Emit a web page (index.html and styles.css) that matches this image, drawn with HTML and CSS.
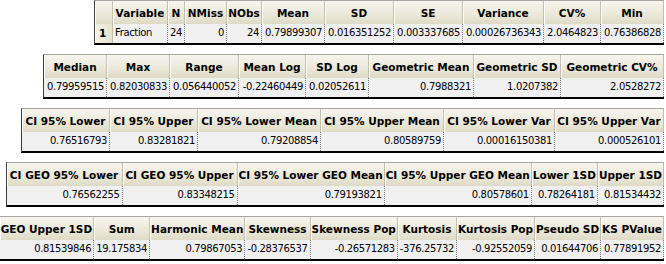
FILE: index.html
```html
<!DOCTYPE html>
<html lang="en">
<head>
<meta charset="utf-8">
<title>Summary statistics</title>
<link rel="stylesheet" href="styles.css">
</head>
<body>
<div class="stats">
  <table class="grid g-desc">
    <thead>
      <tr><th class="corner"></th><th>Variable</th><th>N</th><th>NMiss</th><th>NObs</th><th>Mean</th><th>SD</th><th>SE</th><th>Variance</th><th>CV%</th><th>Min</th></tr>
    </thead>
    <tbody>
      <tr><th class="rownum">1</th><td class="txt">Fraction</td><td class="txt">24</td><td>0</td><td>24</td><td>0.79899307</td><td>0.016351252</td><td>0.003337685</td><td>0.00026736343</td><td>2.0464823</td><td>0.76386828</td></tr>
    </tbody>
  </table>

  <table class="grid g-spread">
    <thead>
      <tr><th>Median</th><th>Max</th><th>Range</th><th>Mean Log</th><th>SD Log</th><th>Geometric Mean</th><th>Geometric SD</th><th>Geometric CV%</th></tr>
    </thead>
    <tbody>
      <tr><td>0.79959515</td><td>0.82030833</td><td>0.056440052</td><td>-0.22460449</td><td>0.02052611</td><td>0.7988321</td><td>1.0207382</td><td>2.0528272</td></tr>
    </tbody>
  </table>

  <table class="grid g-ci">
    <thead>
      <tr><th>CI 95% Lower</th><th>CI 95% Upper</th><th>CI 95% Lower Mean</th><th>CI 95% Upper Mean</th><th>CI 95% Lower Var</th><th>CI 95% Upper Var</th></tr>
    </thead>
    <tbody>
      <tr><td>0.76516793</td><td>0.83281821</td><td>0.79208854</td><td>0.80589759</td><td>0.00016150381</td><td>0.000526101</td></tr>
    </tbody>
  </table>

  <table class="grid g-ci-geo">
    <thead>
      <tr><th>CI GEO 95% Lower</th><th>CI GEO 95% Upper</th><th>CI 95% Lower GEO Mean</th><th>CI 95% Upper GEO Mean</th><th>Lower 1SD</th><th>Upper 1SD</th></tr>
    </thead>
    <tbody>
      <tr><td>0.76562255</td><td>0.83348215</td><td>0.79193821</td><td>0.80578601</td><td>0.78264181</td><td>0.81534432</td></tr>
    </tbody>
  </table>

  <table class="grid g-shape">
    <thead>
      <tr><th>GEO Upper 1SD</th><th>Sum</th><th>Harmonic Mean</th><th>Skewness</th><th>Skewness Pop</th><th>Kurtosis</th><th>Kurtosis Pop</th><th>Pseudo SD</th><th>KS PValue</th></tr>
    </thead>
    <tbody>
      <tr><td>0.81539846</td><td>19.175834</td><td>0.79867053</td><td>-0.28376537</td><td>-0.26571283</td><td>-376.25732</td><td>-0.92552059</td><td>0.01644706</td><td>0.77891952</td></tr>
    </tbody>
  </table>
</div>
</body>
</html>
```

FILE: styles.css
```css
html, body {
  margin: 0;
  background: #ffffff;
}

body {
  font-family: "DejaVu Sans", Verdana, sans-serif;
  font-size: 10px;
  line-height: 12px;
  color: #000000;
}

/* stack of result grids, each pushed to the right edge */
.stats {
  display: flex;
  flex-direction: column;
  align-items: flex-end;
  gap: 9px;
  padding-right: 2px;
}

.grid {
  border-collapse: separate;
  border-spacing: 0;
  border-top: 1px solid #a7a6a0;
  border-left: 1px solid #3c3c3c;
  border-bottom: 2px solid #000000;
}

.grid th,
.grid td {
  box-sizing: border-box;
  white-space: nowrap;
}

/* column headers: beige, raised look */
.grid th {
  height: 23px;
  padding: 0 1px;
  font-size: 10.5px;
  font-weight: bold;
  text-align: center;
  vertical-align: middle;
  background: linear-gradient(#f6f5ee, #ebe8d9 60%, #dedac6);
  border-right: 1px solid #c3bfaa;
  box-shadow: inset 1px 0 #ffffff;
}

.grid th.rownum {
  height: 19px;
  padding: 3px 0 0 4px;
  text-align: left;
  vertical-align: top;
  background: linear-gradient(90deg, #f4f2e8, #e6e2cf);
}

/* value cells */
.grid td {
  height: 19px;
  padding: 3px 2px 0;
  vertical-align: top;
  text-align: right;
  letter-spacing: -0.35px;
  background: #f0f0f0;
  border-right: 1px dotted #7c7c7c;
}

.grid td.txt {
  text-align: left;
}

/* column widths, left to right */
.g-desc th:nth-child(1)  { width: 18px; }
.g-desc th:nth-child(2)  { width: 55px; }
.g-desc th:nth-child(3)  { width: 15px; }
.g-desc th:nth-child(4)  { width: 42px; }
.g-desc th:nth-child(5)  { width: 35px; }
.g-desc th:nth-child(6)  { width: 63px; }
.g-desc th:nth-child(7)  { width: 69px; }
.g-desc th:nth-child(8)  { width: 69px; }
.g-desc th:nth-child(9)  { width: 81px; }
.g-desc th:nth-child(10) { width: 57px; }
.g-desc th:nth-child(11) { width: 63px; }

.g-spread th:nth-child(1) { width: 63px; }
.g-spread th:nth-child(2) { width: 63px; }
.g-spread th:nth-child(3) { width: 69px; }
.g-spread th:nth-child(4) { width: 67px; }
.g-spread th:nth-child(5) { width: 63px; }
.g-spread th:nth-child(6) { width: 105px; }
.g-spread th:nth-child(7) { width: 87px; }
.g-spread th:nth-child(8) { width: 103px; }

.g-ci th:nth-child(1) { width: 88px; }
.g-ci th:nth-child(2) { width: 88px; }
.g-ci th:nth-child(3) { width: 123px; }
.g-ci th:nth-child(4) { width: 123px; }
.g-ci th:nth-child(5) { width: 111px; }
.g-ci th:nth-child(6) { width: 109px; }

.g-ci-geo th:nth-child(1) { width: 116px; }
.g-ci-geo th:nth-child(2) { width: 115px; }
.g-ci-geo th:nth-child(3) { width: 147px; }
.g-ci-geo th:nth-child(4) { width: 145px; }
.g-ci-geo th:nth-child(5) { width: 66px; }
.g-ci-geo th:nth-child(6) { width: 64px; }

.g-shape th:nth-child(1) { width: 96px; }
.g-shape th:nth-child(2) { width: 56px; }
.g-shape th:nth-child(3) { width: 96px; }
.g-shape th:nth-child(4) { width: 65px; }
.g-shape th:nth-child(5) { width: 87px; }
.g-shape th:nth-child(6) { width: 60px; }
.g-shape th:nth-child(7) { width: 78px; }
.g-shape th:nth-child(8) { width: 63px; }
.g-shape th:nth-child(9) { width: 61px; }
```
